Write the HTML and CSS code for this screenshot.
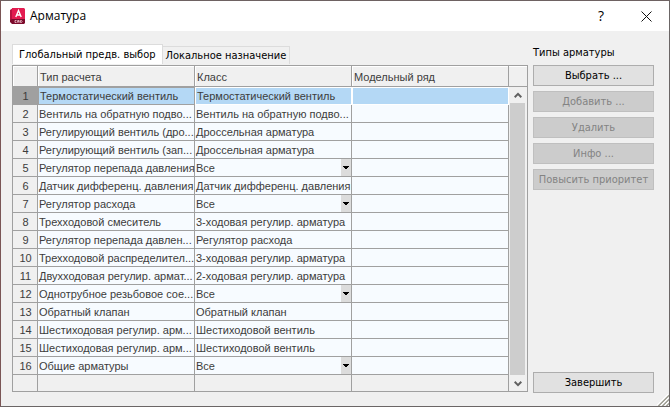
FILE: index.html
```
<!DOCTYPE html>
<html lang="ru">
<head>
<meta charset="utf-8">
<title>Арматура</title>
<link rel="stylesheet" href="styles.css">
</head>
<body>
<div class="window">
  <header class="titlebar">
    <svg class="logo" viewBox="0 0 15 16" aria-hidden="true">
      <path fill="#b8123f" d="M0 2 3 0v14l-3-2z"/>
      <path fill="#e31c50" d="M2 0h12l1 1v10H2z"/>
      <path fill="#7c0b2c" d="M2 11h13v4l-1 1H2l-2-2v-2z"/>
      <path fill="none" stroke="#fff" stroke-width="1.4" d="M5.800 9 8.500 2.500 11.200 9M6.800 7h3.400"/>
      <path fill="none" stroke="#f3c9d4" stroke-width=".8" d="M6.500 12.500H5v2h1.500M7.700 14.700v-2.200h1.400v2.200M7.700 13.700h1.400M10.500 12.500v2h1l.6-1-.6-1z"/>
    </svg>
    <h1 class="title">Арматура</h1>
    <button class="caption" type="button" aria-label="Справка">?</button>
    <button class="caption" type="button" aria-label="Закрыть">
      <svg class="cross" viewBox="0 0 11 11"><path d="M.5.5l10 10M10.500.5l-10 10"/></svg>
    </button>
  </header>
  <main class="content">
    <section class="left">
      <div class="tabs" role="tablist">
        <button class="tab active" type="button" role="tab" aria-selected="true">Глобальный предв. выбор</button>
        <button class="tab" type="button" role="tab" aria-selected="false">Локальное назначение</button>
      </div>
      <div class="frame">
        <table class="grid">
          <colgroup><col class="numcol"><col><col><col></colgroup>
          <thead>
            <tr><th></th><th>Тип расчета</th><th>Класс</th><th>Модельный ряд</th></tr>
          </thead>
          <tbody>
            <tr class="selected"><th>1</th><td class="focus">Термостатический вентиль</td><td>Термостатический вентиль</td><td></td></tr>
            <tr><th>2</th><td>Вентиль на обратную подво...</td><td>Вентиль на обратную подво...</td><td></td></tr>
            <tr><th>3</th><td>Регулирующий вентиль (дро...</td><td>Дроссельная арматура</td><td></td></tr>
            <tr><th>4</th><td>Регулирующий вентиль (зап...</td><td>Дроссельная арматура</td><td></td></tr>
            <tr><th>5</th><td>Регулятор перепада давления</td><td class="pick"><select aria-label="Класс, строка 5"><option>Все</option></select></td><td></td></tr>
            <tr><th>6</th><td>Датчик дифференц. давления</td><td>Датчик дифференц. давления</td><td></td></tr>
            <tr><th>7</th><td>Регулятор расхода</td><td class="pick"><select aria-label="Класс, строка 7"><option>Все</option></select></td><td></td></tr>
            <tr><th>8</th><td>Трехходовой смеситель</td><td>3-ходовая регулир. арматура</td><td></td></tr>
            <tr><th>9</th><td>Регулятор перепада давлен...</td><td>Регулятор расхода</td><td></td></tr>
            <tr><th>10</th><td>Трехходовой распределител...</td><td>3-ходовая регулир. арматура</td><td></td></tr>
            <tr><th>11</th><td>Двухходовая регулир. армат...</td><td>2-ходовая регулир. арматура</td><td></td></tr>
            <tr><th>12</th><td>Однотрубное резьбовое сое...</td><td class="pick"><select aria-label="Класс, строка 12"><option>Все</option></select></td><td></td></tr>
            <tr><th>13</th><td>Обратный клапан</td><td>Обратный клапан</td><td></td></tr>
            <tr><th>14</th><td>Шестиходовая регулир. арм...</td><td>Шестиходовой вентиль</td><td></td></tr>
            <tr><th>15</th><td>Шестиходовая регулир. арм...</td><td>Шестиходовой вентиль</td><td></td></tr>
            <tr><th>16</th><td>Общие арматуры</td><td class="pick"><select aria-label="Класс, строка 16"><option>Все</option></select></td><td></td></tr>
          </tbody>
          <tfoot><tr><td></td><td></td><td></td><td></td></tr></tfoot>
        </table>
        <div class="scroll">
          <div class="corner"></div>
          <button class="arrow" type="button" aria-label="Вверх"><svg viewBox="0 0 8 7"><path d="M.7 5.200 4 1.900l3.300 3.300"/></svg></button>
          <div class="thumb"></div>
          <button class="arrow" type="button" aria-label="Вниз"><svg viewBox="0 0 8 7"><path d="M.7 1.800 4 5.100l3.300-3.300"/></svg></button>
        </div>
      </div>
    </section>
    <aside class="side">
      <h2 class="heading">Типы арматуры</h2>
      <button class="action" type="button">Выбрать ...</button>
      <button class="action" type="button" disabled>Добавить ...</button>
      <button class="action" type="button" disabled>Удалить</button>
      <button class="action" type="button" disabled>Инфо ...</button>
      <button class="action" type="button" disabled>Повысить приоритет</button>
      <button class="action finish" type="button">Завершить</button>
    </aside>
  </main>
  <svg class="grip" viewBox="0 0 12 12" aria-hidden="true">
    <path stroke="#fff" d="M0 11 11 0M4 11l7-7M8 11l3-3"/>
    <path stroke="#a5a59b" d="M1 12 12 1M2 12 12 2M5 12l7-7M6 12l6-6M9 12l3-3M10 12l2-2"/>
  </svg>
</div>
</body>
</html>
```
FILE: styles.css
```
* { box-sizing: border-box; }

body {
  margin: 0;
  color: #000;
  font: 11px/14px "DejaVu Sans Condensed", "DejaVu Sans", sans-serif;
}

button, select {
  margin: 0;
  padding: 0;
  border: 0;
  border-radius: 0;
  background: none;
  color: inherit;
  font: inherit;
}

.window {
  position: relative;
  display: flex;
  flex-direction: column;
  min-height: 100vh;
  border: 1px solid #6b6666;
  border-top-color: #6e6262;
  border-left-color: #7a5555;
  background: #f0f0f0;
}

.titlebar {
  display: flex;
  align-items: center;
  height: 30px;
  padding: 0 7px 0 9px;
  background: #fff;
}

.logo { width: 15px; height: 16px; margin-right: 5px; }

.title {
  flex: 1;
  margin: 0;
  font: 12px/16px "Open Sans", sans-serif;
}

.caption {
  display: flex;
  align-items: center;
  justify-content: center;
  width: 32px;
  height: 28px;
  margin-left: 13px;
  font: 14px/16px "Open Sans", sans-serif;
}

.cross { width: 11px; height: 11px; fill: none; stroke: #111; }

.content {
  display: flex;
  flex: 1;
  gap: 5px;
  padding: 13px 15px 13px 11px;
}

.left { display: flex; flex: 1; flex-direction: column; min-width: 0; }

.tabs { display: flex; align-items: flex-end; height: 21px; padding-bottom: 1px; }

.tab {
  height: 18px;
  padding: 0 3px;
  border: 1px solid #dcdcdc;
  border-width: 1px 1px 0 0;
  white-space: nowrap;
}

.tab.active {
  height: 20px;
  padding: 0 6px;
  border-left-width: 1px;
  background: #fff;
}

.frame { display: flex; flex: 1; margin-bottom: 1px; border: 1px solid #a0a0a0; }

.grid {
  flex: 1;
  width: 0;
  border-spacing: 0;
  table-layout: fixed;
  color: #3c3c3c;
  font: 11px/14px "Liberation Sans", Arial, sans-serif;
}

.numcol { width: 25px; }

.grid th, .grid td {
  height: 18px;
  padding: 1px 0 0 1px;
  border: 1px solid #a0a0a0;
  border-width: 0 1px 1px 0;
  background: #f7fbff;
  font-weight: 400;
  text-align: left;
  white-space: nowrap;
}

.grid th { background: #f0f0f0; }
.grid thead th { height: 21px; padding: 2px 2px 0; box-shadow: inset 1px 1px #fff; }
.grid tbody th { text-align: center; }
.grid tfoot td { height: 16px; border-bottom: 0; background: #f0f0f0; }

.grid .selected th { background: #a0a0a0; }
.grid .selected td { padding-left: 2px; border-color: #fff; background: #b4d8f5; box-shadow: inset 1px 1px #fff; }
.grid .selected .focus { border-color: #a0a0a0; box-shadow: inset 1px 1px #a0a0a0; }

.grid .pick { padding: 0; }

/* Drop-down arrow on a grey strip at the right edge of the cell */
.pick select {
  display: block;
  appearance: none;
  width: 100%;
  height: 17px;
  padding: 1px 11px 0 1px;
  background:
    conic-gradient(from -45deg at 50% 100%, #000 90deg, transparent 0) right 2px top 7px / 6px 3px no-repeat,
    linear-gradient(#dcdcdc, #dcdcdc) right / 10px 100% no-repeat;
}

.scroll { display: flex; flex-direction: column; width: 18px; }
.corner { height: 21px; border-top: 1px solid #fff; border-bottom: 1px solid #a0a0a0; }
.arrow { display: grid; place-items: center; height: 16px; }
.arrow svg { width: 8px; height: 7px; fill: none; stroke: #606060; stroke-width: 2; }
.thumb { flex: 1; margin: 0 2px 0 1px; background: #cdcdcd; }

.side { display: flex; flex-direction: column; gap: 5px; width: 121px; }

.heading { margin: 0; height: 16px; font: inherit; line-height: 18px; }

.action {
  height: 21px;
  border: 1px solid #adadad;
  background: #e1e1e1;
}

.action:disabled { border-color: #bfbfbf; background: #ccc; color: #838383; }
.finish { margin-top: auto; }

.grip { position: absolute; right: 0; bottom: 0; width: 12px; height: 12px; }
```
